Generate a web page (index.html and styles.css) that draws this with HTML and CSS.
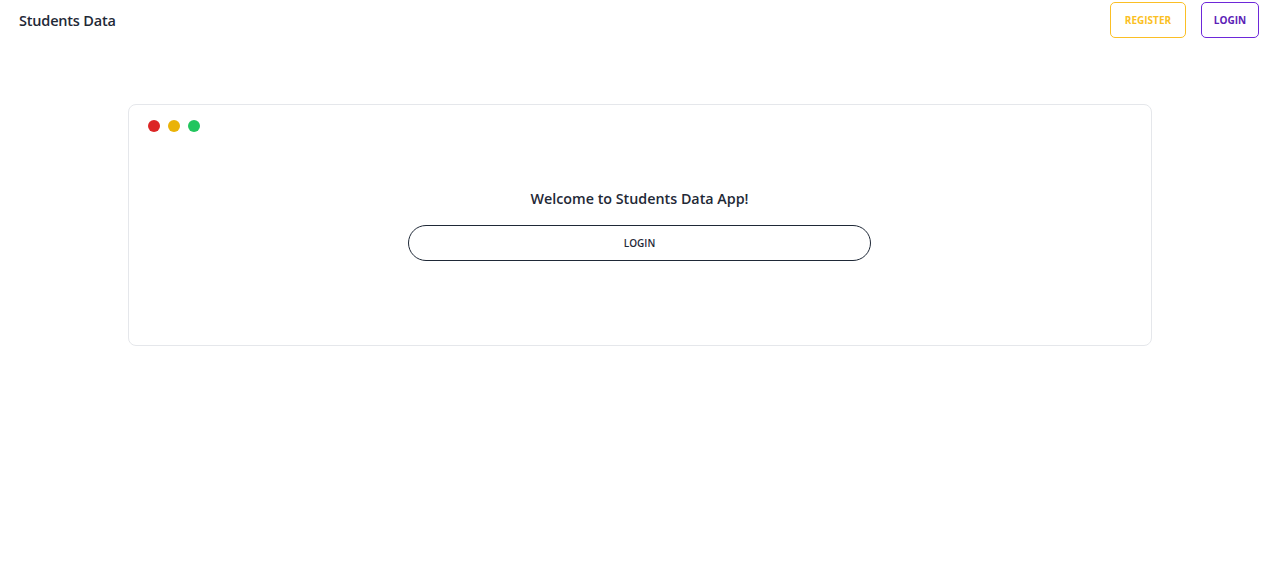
FILE: index.html
```html
<!DOCTYPE html>
<html lang="en">
<head>
<meta charset="utf-8">
<title>Students Data</title>
<link rel="stylesheet" href="styles.css">
</head>
<body>
<header class="nav">
  <div class="brand">Students Data</div>
  <div class="actions">
    <button class="btn btn-register">REGISTER</button>
    <button class="btn btn-login">LOGIN</button>
  </div>
</header>
<main class="main">
  <section class="card">
    <div class="dots">
      <span class="dot red"></span>
      <span class="dot yellow"></span>
      <span class="dot green"></span>
    </div>
    <div class="card-body">
      <h1 class="welcome">Welcome to Students Data App!</h1>
      <button class="pill">LOGIN</button>
    </div>
  </section>
</main>
</body>
</html>
```
FILE: styles.css
```css
* { box-sizing: border-box; }
html, body { margin: 0; padding: 0; background: #fff; }
body {
  font-family: "Open Sans", "Noto Sans", sans-serif;
  color: #1f2937;
}
.nav {
  display: flex;
  justify-content: space-between;
  align-items: center;
  height: 40px;
  padding: 0 20px 0 19px;
}
.brand {
  font-size: 14.5px;
  font-weight: 600;
  color: #1f2937;
  letter-spacing: -0.2px;
}
.actions { display: flex; gap: 15px; }
.btn {
  font-family: inherit;
  font-size: 10px;
  font-weight: 700;
  background: #fff;
  height: 36px;
  border-radius: 5px;
  padding: 0;
  cursor: pointer;
}
.btn-register { width: 76px; border: 1px solid #fbbf24; color: #fbbf24; }
.btn-login { width: 58px; border: 1px solid #6d28d9; color: #5b21b6; }
.main { padding: 64px 0 0; display: flex; justify-content: center; }
.card {
  width: 1024px;
  height: 242px;
  border: 1px solid #e5e7eb;
  border-radius: 8px;
  padding: 15px 19px;
}
.dots { display: flex; gap: 8px; }
.dot { width: 12px; height: 12px; border-radius: 50%; display: block; }
.red { background: #dc2626; }
.yellow { background: #eab308; }
.green { background: #22c55e; }
.card-body {
  display: flex;
  flex-direction: column;
  align-items: center;
  padding-top: 56px;
  margin-left: -19px;
  margin-right: -19px;
}
.welcome {
  margin: 0 0 15px;
  font-size: 14.3px;
  font-weight: 600;
  color: #1f2937;
  line-height: 22px;
}
.pill {
  width: 463px;
  height: 36px;
  border: 1px solid #1f2937;
  border-radius: 999px;
  background: #fff;
  font-family: inherit;
  font-size: 10px;
  font-weight: 600;
  color: #1f2937;
  padding: 0;
}
```
